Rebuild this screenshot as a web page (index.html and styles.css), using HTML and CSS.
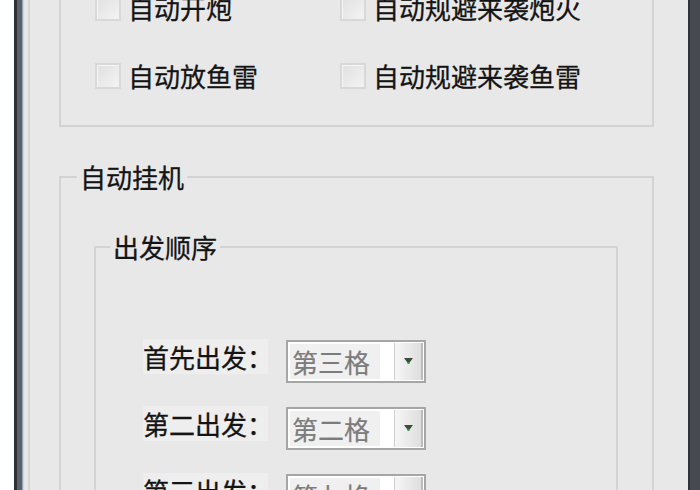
FILE: index.html
```html
<!DOCTYPE html>
<html lang="zh-CN">
<head>
<meta charset="utf-8">
<title>设置</title>
<link rel="stylesheet" href="styles.css">
</head>
<body>
<div class="screen">
  <div class="frame-left"></div>
  <div class="client">
    <div class="panel">
      <fieldset class="group top-group">
        <div class="check-grid">
          <label class="check"><span class="box"></span><span class="check-text">自动开炮</span></label>
          <label class="check"><span class="box"></span><span class="check-text">自动规避来袭炮火</span></label>
          <label class="check"><span class="box"></span><span class="check-text">自动放鱼雷</span></label>
          <label class="check"><span class="box"></span><span class="check-text">自动规避来袭鱼雷</span></label>
        </div>
      </fieldset>

      <fieldset class="group auto-group">
        <legend>自动挂机</legend>
        <fieldset class="group order-group">
          <legend>出发顺序</legend>
          <div class="rows">
            <div class="row">
              <span class="row-label">首先出发：</span>
              <div class="combo">
                <span class="combo-text">第三格</span>
                <span class="combo-btn"><svg width="9" height="7" viewBox="0 0 9 7"><path d="M0 0H9L4.5 6Z" fill="#3d4a3d"/><rect x="3.5" y="4" width="2" height="2" fill="#2fa02f"/></svg></span>
              </div>
            </div>
            <div class="row">
              <span class="row-label">第二出发：</span>
              <div class="combo">
                <span class="combo-text">第二格</span>
                <span class="combo-btn"><svg width="9" height="7" viewBox="0 0 9 7"><path d="M0 0H9L4.5 6Z" fill="#3d4a3d"/><rect x="3.5" y="4" width="2" height="2" fill="#2fa02f"/></svg></span>
              </div>
            </div>
            <div class="row">
              <span class="row-label">第三出发：</span>
              <div class="combo">
                <span class="combo-text">第七格</span>
                <span class="combo-btn"><svg width="9" height="7" viewBox="0 0 9 7"><path d="M0 0H9L4.5 6Z" fill="#3d4a3d"/><rect x="3.5" y="4" width="2" height="2" fill="#2fa02f"/></svg></span>
              </div>
            </div>
          </div>
        </fieldset>
      </fieldset>
    </div>
  </div>
  <div class="frame-right"></div>
</div>
</body>
</html>
```

FILE: styles.css
```css
html, body {
  margin: 0;
  padding: 0;
  background: #ffffff;
  height: 490px;
  overflow: hidden;
}

.screen {
  display: flex;
  height: 490px;
  padding-left: 14px;
  box-sizing: border-box;
  overflow: hidden;
  font-family: "Noto Sans CJK SC", "Noto Sans", sans-serif;
  font-size: 26px;
  color: #141414;
  -webkit-text-stroke: 0.3px #141414;
}

.frame-left {
  width: 12px;
  flex: none;
  background: linear-gradient(to right,
    #2c3136 0 3px,
    #5b626e 3px 8px,
    #98a5b3 8px 9px,
    #cdd6de 9px 10px,
    #e3e7eb 10px 12px);
}

.frame-right {
  width: 12px;
  flex: none;
  background: linear-gradient(to right, #2f3237 0 2px, #46494f 2px 12px);
}

.client {
  flex: 1;
  background: #e8e8e8;
  overflow: hidden;
}

.panel {
  margin-left: 2px;
  margin-top: -50px;
  border-left: 2px solid #d5d5d5;
  padding-left: 29px;
  padding-right: 34px;
  min-height: 700px;
}

.group {
  margin: 0;
  border: 2px solid #d3d3d3;
  min-width: 0;
}

.group legend {
  padding: 0 3px;
  font-size: 26px;
  line-height: 28px;
}

.top-group {
  padding: 43px 0 36px 34px;
}

.check-grid {
  display: grid;
  grid-template-columns: 245px 1fr;
  row-gap: 42px;
}

.check {
  display: flex;
  align-items: center;
  gap: 7px;
  height: 26px;
  line-height: 26px;
}

.box {
  width: 26px;
  height: 26px;
  box-sizing: border-box;
  border: 2px solid #d8d8d8;
  background: linear-gradient(135deg, #e0e0e0, #f3f3f3);
  box-shadow: inset 1px 1px 0 #f6f6f6;
  flex: none;
}

.check-text {
  white-space: nowrap;
}

.auto-group {
  margin-top: 36px;
  padding: 0 34px 40px 16px;
}

.order-group {
  margin: 42px 0 0 17px;
  padding: 0 0 40px 14px;
}

.rows {
  display: flex;
  flex-direction: column;
  gap: 24px;
  padding: 79px 0 0 33px;
}

.row {
  display: flex;
  align-items: flex-start;
  gap: 18px;
}

.row-label {
  width: 125px;
  height: 35px;
  line-height: 35px;
  margin-top: -1px;
  background: #eeeeee;
  white-space: nowrap;
}

.combo {
  width: 140px;
  height: 43px;
  box-sizing: border-box;
  border: 2px solid #a6a6a6;
  background: #ffffff;
  display: flex;
  align-items: center;
  padding: 0 1px 0 2px;
}

.combo-text {
  width: 88px;
  height: 35px;
  line-height: 35px;
  padding-left: 2px;
  background: #f0f0f0;
  color: #7c7c7c;
  -webkit-text-stroke: 0.2px #7c7c7c;
  white-space: nowrap;
}

.combo-btn {
  margin-left: auto;
  width: 29px;
  height: 37px;
  box-sizing: border-box;
  border-left: 1px solid #cfcfcf;
  border-right: 2px solid #bcbcbc;
  background: linear-gradient(to right, #f6f6f6, #dedede);
  display: flex;
  align-items: center;
  justify-content: center;
}
```
